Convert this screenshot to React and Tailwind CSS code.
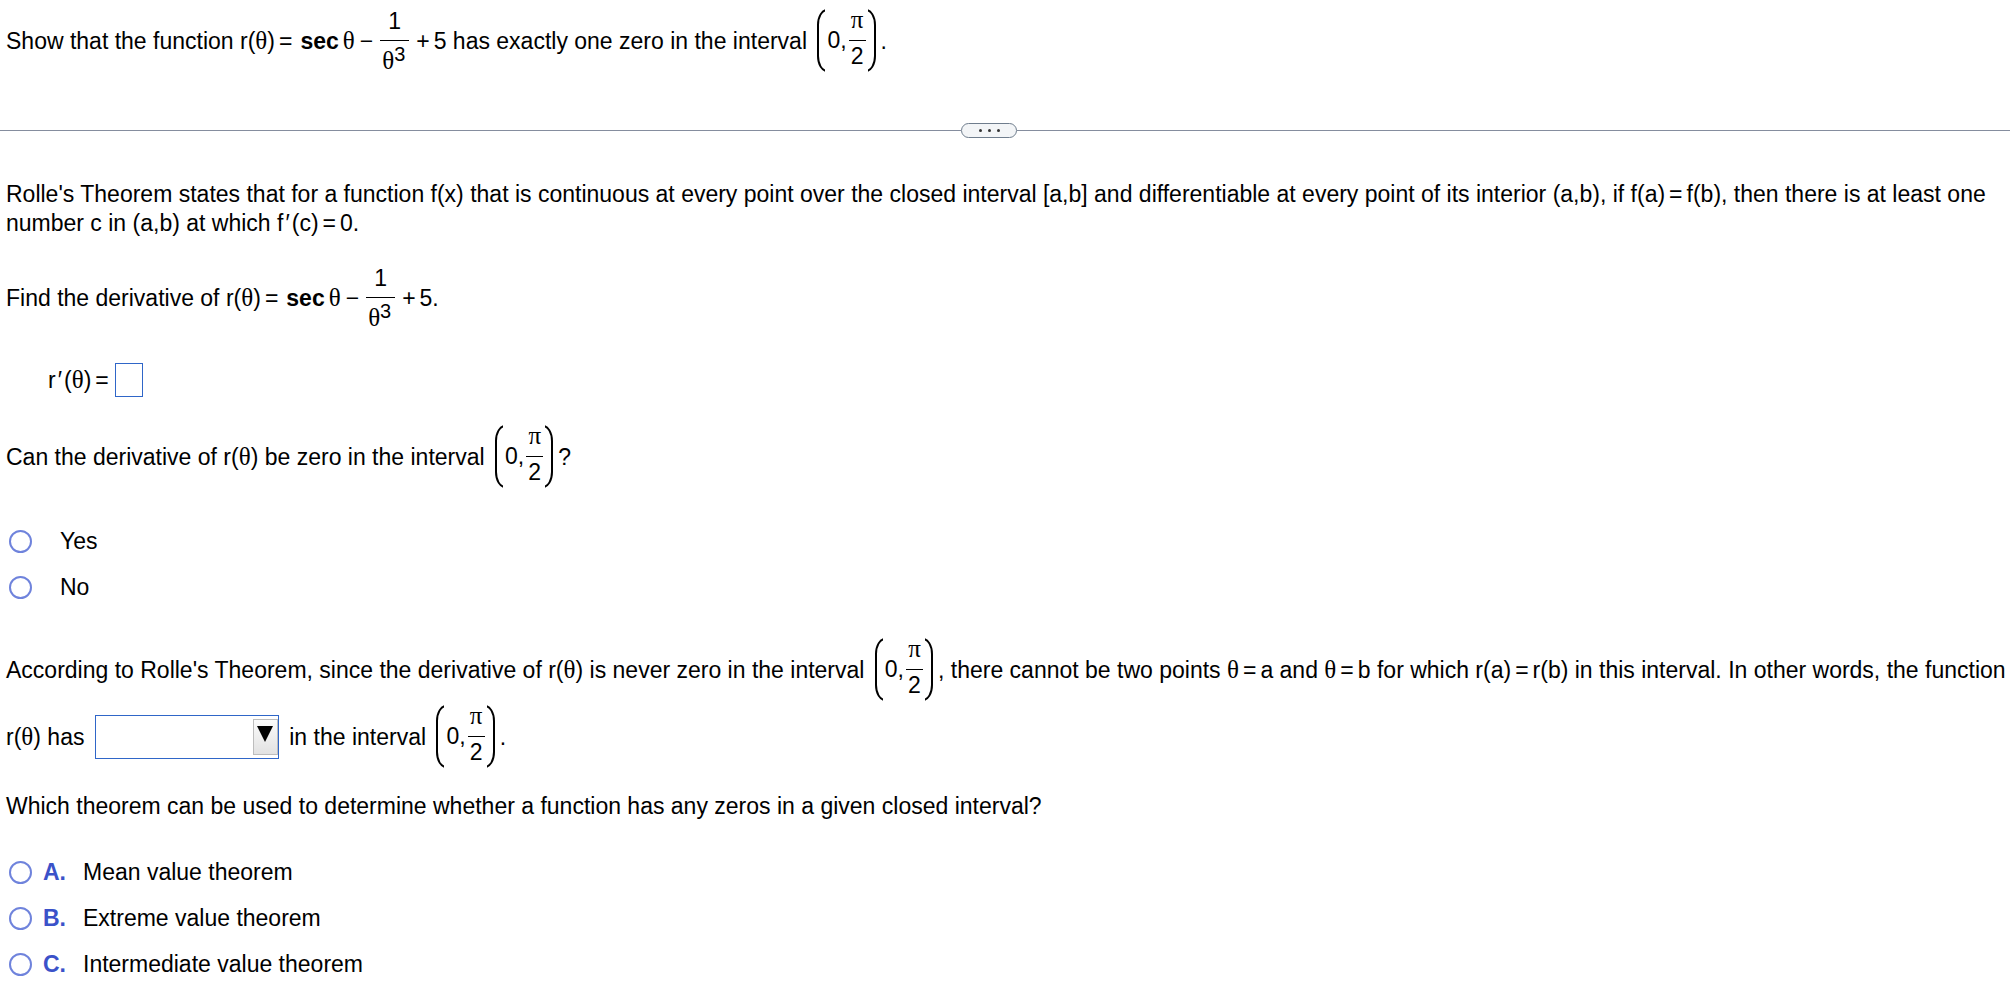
import React from "react";

const Theta = () => <span className="font-['Liberation_Serif',serif] text-[25px] leading-none">θ</span>;

const Eq = () => <span className="mx-1">=</span>;

const Prime = () => <span className="mx-0.5">′</span>;

const Paren = ({ side }) => (
  <span className={`flex h-[63px] w-2 shrink-0 overflow-hidden ${side === "left" ? "justify-start" : "justify-end"}`}>
    <span className="h-full w-5 shrink-0 rounded-[10px/16px] border-2 border-black" />
  </span>
);

const Fraction = ({ top, children, className = "" }) => (
  <span className={`inline-flex flex-col items-stretch text-center align-middle leading-[23px] ${className}`}>
    <span className="flex h-[31px] items-end justify-center pb-[7px]">{top}</span>
    <span className="h-8 border-t border-black pt-1">{children}</span>
  </span>
);

const Interval = () => (
  <span className="mb-1 ml-1 mr-[5px] inline-flex items-center align-middle leading-[29px]">
    <Paren side="left" />
    <span className="ml-0.5">0,</span>
    <Fraction
      className="mx-0.5 w-[17px]"
      top={<span className="pb-0.5 font-['Liberation_Serif',serif] text-[25px]">π</span>}
    >
      2
    </Fraction>
    <Paren side="right" />
  </span>
);

const ROfTheta = () => (
  <span className="whitespace-nowrap">
    r(<Theta />)
  </span>
);

const Formula = () => (
  <span className="whitespace-nowrap">
    <ROfTheta />
    <span className="ml-1 mr-2">=</span>
    <b>sec</b>
    <span className="ml-1">
      <Theta />
    </span>
    <span className="ml-[5px]">−</span>
    <Fraction className="mx-[7px] mb-1 w-[29px]" top="1">
      <span className="flex pl-0.5 pt-[3px]">
        <Theta />
        <span className="text-[20px] leading-3">3</span>
      </span>
    </Fraction>
    <span className="mr-1">+</span>5
  </span>
);

const Radio = (props) => (
  <input
    type="radio"
    className="size-[23px] shrink-0 appearance-none rounded-full border-2 border-[#6f83dc] bg-white checked:border-[7px]"
    {...props}
  />
);

const theorems = [
  ["A.", "Mean value theorem"],
  ["B.", "Extreme value theorem"],
  ["C.", "Intermediate value theorem"],
];

export default function App() {
  return (
    <main className="bg-white font-['Liberation_Sans',Arial,sans-serif] text-[23px] leading-[29px] text-black">
      <header className="px-1.5 pt-[9px]">
        <p>
          Show that the function <Formula /> has exactly one zero in the interval <Interval />.
        </p>
      </header>

      <div className="mt-[47px] flex items-center">
        <span className="h-px flex-[492] bg-[#858d9e]" />
        <button
          type="button"
          aria-label="Show more"
          className="flex h-[15px] w-14 items-center justify-center gap-1.5 rounded-full border border-[#6f7d8d] bg-[#f3f5f7]"
        >
          <span className="size-[3px] rounded-full bg-[#333]" />
          <span className="size-[3px] rounded-full bg-[#333]" />
          <span className="size-[3px] rounded-full bg-[#333]" />
        </button>
        <span className="h-px flex-[508] bg-[#858d9e]" />
      </div>

      <div className="pl-1.5 pt-[42px]">
        <p>
          Rolle's Theorem states that for a function f(x) that is continuous at every point over the closed interval
          [a,b] and differentiable at every point of its interior (a,b), if f(a)
          <Eq />
          f(b), then there is at least one number c in (a,b) at which f
          <Prime />
          (c)
          <Eq />
          0.
        </p>

        <p className="mt-7">
          Find the derivative of <Formula />.
        </p>

        <p className="mt-[30px] pl-[42px]">
          <label htmlFor="derivative">
            r
            <Prime />(<Theta />)
            <Eq />
          </label>
          <input
            id="derivative"
            type="text"
            className="mb-1 ml-0.5 h-[34px] w-7 border border-[#2f66c8] bg-white px-1 align-middle outline-none"
          />
        </p>

        <p className="mt-6">
          Can the derivative of <ROfTheta /> be zero in the interval <Interval />?
        </p>

        <fieldset className="mt-[26px]">
          {["Yes", "No"].map((answer) => (
            <label key={answer} className="flex h-[46px] items-center gap-7 pl-[3px]">
              <Radio name="zero" value={answer} />
              {answer}
            </label>
          ))}
        </fieldset>

        <p className="mt-7">
          According to Rolle's Theorem, since the derivative of <ROfTheta /> is never zero in the interval{" "}
          <Interval />, there cannot be two points <Theta />
          <Eq />a and <Theta />
          <Eq />b for which r(a)
          <Eq />
          r(b) in this interval. In other words, the function <ROfTheta /> has{" "}
          <span className="relative mx-1 mb-1 inline-block h-11 w-[184px] align-middle">
            <select
              aria-label="Number of zeros"
              defaultValue=""
              className="block h-full w-full appearance-none border border-[#2f66c8] bg-white pl-2 outline-none"
            >
              <option value=""></option>
              <option>at most one zero</option>
              <option>at least one zero</option>
            </select>
            <span className="pointer-events-none absolute inset-y-1 right-px flex w-[25px] justify-center border border-[#bdbdbd] bg-linear-to-b from-[#fbfbfb] to-[#e2e2e2] pt-1.5">
              <svg width="16" height="16" viewBox="0 0 16 16" aria-hidden="true">
                <path d="M0 0h16L8 16z" />
              </svg>
            </span>
          </span>{" "}
          in the interval <Interval />.
        </p>

        <p className="mt-5">
          Which theorem can be used to determine whether a function has any zeros in a given closed interval?
        </p>

        <fieldset className="mt-7">
          {theorems.map(([letter, name]) => (
            <label key={letter} className="flex h-[46px] items-center pl-[3px]">
              <Radio name="theorem" value={letter} />
              <b className="ml-[11px] w-10 text-[#3b52c9]">{letter}</b>
              {name}
            </label>
          ))}
        </fieldset>
      </div>
    </main>
  );
}
